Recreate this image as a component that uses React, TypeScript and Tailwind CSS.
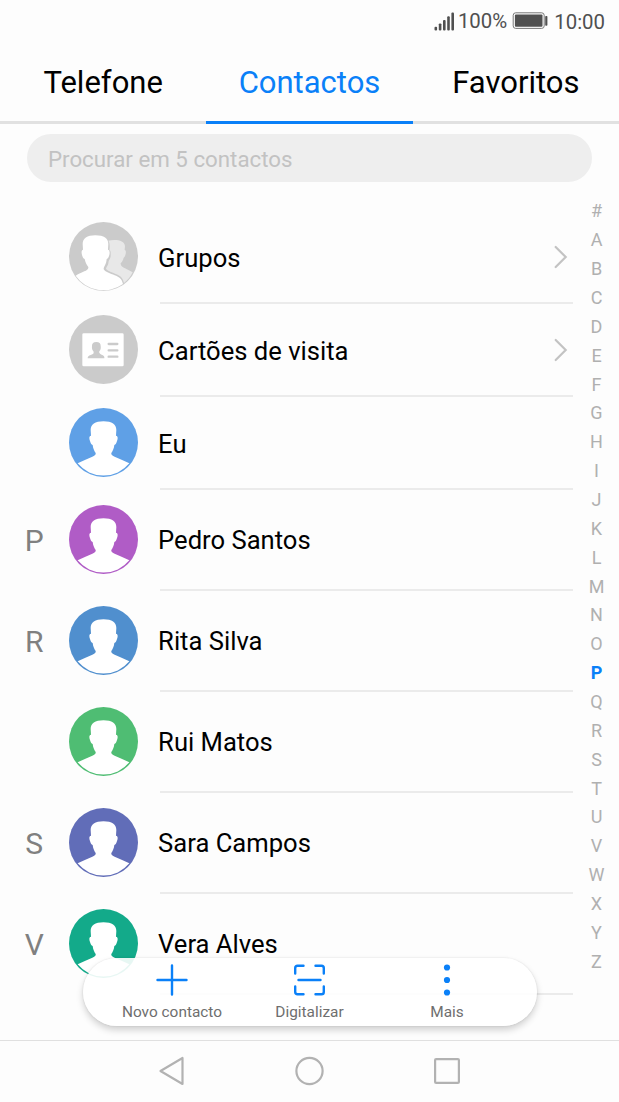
import React from "react";

type Contact = { name: string; color: string; letter?: string };

const contacts: Contact[] = [
  { name: "Pedro Santos", color: "#b05cc6", letter: "P" },
  { name: "Rita Silva", color: "#508fce", letter: "R" },
  { name: "Rui Matos", color: "#4fbd73", letter: "" },
  { name: "Sara Campos", color: "#616db8", letter: "S" },
  { name: "Vera Alves", color: "#13aa8a", letter: "V" },
];

const letters = "#ABCDEFGHIJKLMNOPQRSTUVWXYZ".split("");

function PersonAvatar({ color }: { color: string }) {
  return (
    <svg className="size-[69px] shrink-0" viewBox="0 0 207 207">
      <circle cx="103.5" cy="103.5" r="103.5" fill={color} />
      <path
        fill="#fff"
        d="M103.5 40C78 40 65 49 65 66L66 83C60 83 60 92 63 99C65 106 67 110 71 111C72 122 76 129 80 135C81 140 77 143 70 146C55 153 40 159 26 166A100 100 0 0 0 181 166C167 159 152 153 137 146C130 143 126 140 127 135C131 129 135 122 136 111C140 110 142 106 144 99C147 92 147 83 141 83L142 66C142 49 129 40 103.5 40Z"
      />
    </svg>
  );
}

function GroupAvatar() {
  return (
    <svg className="size-[69px] shrink-0" viewBox="0 0 207 207">
      <circle cx="103.5" cy="103.5" r="103.5" fill="#cbcbcb" />
      <path
        fill="#e8e8e8"
        d="M118 56C138 51 168 54 168 73L167 83C172 85 171 94 169 99C168 103 166 106 164 107C162 116 158 120 155 124C154 132 161 136 168 139L191 151C185 164 177 174 165 183C161 165 152 161 140 156C130 151 117 148 111 141C111 136 115 132 117 128C119 122 118 117 121 113C126 108 125 98 125 91C125 87 123 85 121 85C123 71 122 62 118 56Z"
      />
      <path
        fill="#fff"
        d="M79 40C54 40 41 49 41 66L42 83C37 84 37 92 39 99C41 106 43 110 47 111C49 122 54 130 58 135C59 141 53 145 46 148C35 153 27 157 20 161A101 101 0 0 0 162 186C158 168 149 165 137 160C125 155 107 149 104 142C103 135 112 129 113 111C117 110 119 106 121 99C123 92 122 84 117 83L118 66C118 49 105 40 79 40Z"
      />
    </svg>
  );
}

function CardAvatar() {
  return (
    <svg className="size-[69px] shrink-0" viewBox="0 0 207 207">
      <circle cx="103.5" cy="103.5" r="103.5" fill="#cbcbcb" />
      <rect x="40" y="55" width="124" height="99" rx="4" fill="#fff" />
      <path
        fill="#cbcbcb"
        d="M82 81C73 81 69 85 69 93C68 101 70 106 74 110C75 117 70 118 65 120C59 122 56 124 56 130H106V126C105 121 99 120 94 117C91 115 90 112 91 109C95 104 96 101 95 93C95 85 91 81 82 81Z"
      />
      <path d="M119 87H145M119 106H145M119 125H145" stroke="#cbcbcb" strokeWidth="7" strokeLinecap="round" />
    </svg>
  );
}

function Chevron() {
  return (
    <svg className="mr-[5.5px] h-6 w-[14px]" viewBox="0 0 14 24" fill="none" stroke="#c3c3c3" strokeWidth="2.2" strokeLinecap="round">
      <path d="M1.7 2L11.7 12L1.7 22" />
    </svg>
  );
}

function Row({
  label,
  letter = "",
  avatar,
  tall = false,
  chevron = false,
}: {
  label: string;
  letter?: string;
  avatar: React.ReactNode;
  tall?: boolean;
  chevron?: boolean;
}) {
  return (
    <div className={`flex shrink-0 ${tall ? "h-[101px]" : "h-[93px]"}`}>
      <div className={`flex w-[68.5px] items-center justify-center text-[30px] text-[#808080] ${tall ? "pb-px" : ""}`}>{letter}</div>
      <div className={`flex items-center ${tall ? "pb-[2px]" : "pb-[2px]"}`}>{avatar}</div>
      <div className="ml-[22.5px] mr-[2px] flex flex-1 items-center justify-between border-b-2 border-[#ebebeb]">
        <span className={`-ml-[1.9px] text-[25.6px] leading-8 text-black ${tall ? "pt-px" : "pt-[2px]"}`}>{label}</span>
        {chevron && <Chevron />}
      </div>
    </div>
  );
}

function StatusBar() {
  return (
    <header className="flex h-[42px] shrink-0 items-center justify-end pr-[14px] text-[20.4px] leading-[42px] text-[#505050]">
      <svg className="mr-1 h-[19px] w-5" viewBox="0 0 20 20" preserveAspectRatio="none" fill="#505050">
        <rect x="0.5" y="15.5" width="2.6" height="4" rx="1" />
        <rect x="4.8" y="12" width="2.6" height="7.5" rx="1" />
        <rect x="9" y="8.5" width="2.6" height="11" rx="1" />
        <rect x="13.2" y="4.5" width="2.6" height="15" rx="1" />
        <rect x="17.4" y="0.5" width="2.6" height="19" rx="1" />
      </svg>
      <span className="pb-px">100%</span>
      <svg className="ml-[5px] mr-[6px] h-[18px] w-9" viewBox="0 0 36 18">
        <rect x="1.2" y="0.8" width="31" height="15.6" rx="2.5" fill="none" stroke="#777" strokeWidth="1" />
        <rect x="2.9" y="2.4" width="27.6" height="12.4" rx="1" fill="#505050" />
        <rect x="33.2" y="3.9" width="2.2" height="9.8" rx="0.8" fill="#505050" />
      </svg>
      <span className="pt-px">10:00</span>
    </header>
  );
}

function Tabs() {
  const base = "flex flex-1 items-center justify-center border-b-[3.5px] pt-[3px] text-[31px]";
  return (
    <nav className="flex h-[82px] shrink-0">
      <div className={`${base} border-[#e1e1e1] text-black`}>Telefone</div>
      <div className={`${base} border-[#0a80f8] text-[#0a80f8]`}>Contactos</div>
      <div className={`${base} border-[#e1e1e1] text-black`}>Favoritos</div>
    </nav>
  );
}

function AlphabetIndex() {
  return (
    <aside className="flex h-[779px] w-11 shrink-0 flex-col pr-px text-[18px] text-[#b0b0b0]">
      {letters.map((l) => (
        <div
          key={l}
          className={`flex flex-1 items-center justify-center leading-none ${l === "P" ? "font-bold text-[#0a80f8]" : ""}`}
        >
          {l}
        </div>
      ))}
    </aside>
  );
}

function Toolbar() {
  return (
    <div className="absolute left-[82.5px] top-[958px] flex h-[68px] w-[454px] justify-center rounded-full bg-white/90 text-[15.4px] text-[#6e6e6e] shadow-[0_4px_7px_rgba(0,0,0,0.18),0_0_2px_rgba(0,0,0,0.12)]">
      <div className="flex w-[137.5px] flex-col items-center pt-[5px]">
        <svg className="size-[34px]" viewBox="0 0 34 34" fill="none" stroke="#0a80f8" strokeWidth="2.4" strokeLinecap="round">
          <path d="M17 2.5V31.5M2.5 17H31.5" />
        </svg>
        <span className="mt-[3px] whitespace-nowrap leading-6">Novo contacto</span>
      </div>
      <div className="flex w-[137.5px] flex-col items-center pt-[5px]">
        <svg className="size-[34px]" viewBox="0 0 34 34" fill="none" stroke="#0a80f8" strokeWidth="2.4" strokeLinecap="round">
          <path d="M2.2 10.5V5Q2.2 2.7 4.5 2.7H10.5M22.5 2.7H28.5Q30.8 2.7 30.8 5V10.5M30.8 23.5V29Q30.8 31.3 28.5 31.3H22.5M10.5 31.3H4.5Q2.2 31.3 2.2 29V23.5M5.5 17H27.5" />
        </svg>
        <span className="mt-[3px] leading-6">Digitalizar</span>
      </div>
      <div className="flex w-[137.5px] flex-col items-center pt-[5px]">
        <svg className="size-[34px]" viewBox="0 0 34 34" fill="#0a80f8">
          <circle cx="17" cy="4.5" r="3.1" />
          <circle cx="17" cy="17" r="3.1" />
          <circle cx="17" cy="29.5" r="3.1" />
        </svg>
        <span className="mt-[3px] leading-6">Mais</span>
      </div>
    </div>
  );
}

function SystemNav() {
  return (
    <footer className="flex h-[62px] shrink-0 items-center justify-center border-t border-[#e0e0e0] bg-[#fdfdfd] pb-px">
      <div className="flex w-[137.5px] justify-center">
        <svg className="size-8" viewBox="0 0 32 32" fill="none" stroke="#b2b2b2" strokeWidth="2.2" strokeLinejoin="round">
          <path d="M26.5 3V29L4.5 16Z" />
        </svg>
      </div>
      <div className="flex w-[137.5px] justify-center">
        <svg className="size-8" viewBox="0 0 32 32" fill="none" stroke="#b2b2b2" strokeWidth="2.2">
          <circle cx="15.5" cy="16" r="13.1" />
        </svg>
      </div>
      <div className="flex w-[137.5px] justify-center">
        <svg className="size-8" viewBox="0 0 32 32" fill="none" stroke="#b2b2b2" strokeWidth="2.2">
          <rect x="4.1" y="4.1" width="23.8" height="23.8" rx="1" />
        </svg>
      </div>
    </footer>
  );
}

export default function App() {
  return (
    <div className="relative flex h-[1102px] w-[619px] flex-col overflow-hidden bg-[#fdfdfd] font-['Roboto',sans-serif]">
      <StatusBar />
      <Tabs />
      <div className="ml-[27px] mt-[10px] flex h-12 w-[565px] shrink-0 items-center rounded-full bg-[#eeeeee] pl-[21px] pt-[3px] text-[22.3px] text-[#c2c2c2]">
        Procurar em 5 contactos
      </div>
      <main className="flex min-h-0 flex-1 pt-[15px]">
        <div className="flex flex-1 flex-col pt-[14px]">
          <Row label="Grupos" avatar={<GroupAvatar />} chevron />
          <Row label="Cartões de visita" avatar={<CardAvatar />} chevron />
          <Row label="Eu" avatar={<PersonAvatar color="#5fa0e6" />} />
          {contacts.map((c) => (
            <Row key={c.name} label={c.name} letter={c.letter} avatar={<PersonAvatar color={c.color} />} tall />
          ))}
        </div>
        <AlphabetIndex />
      </main>
      <Toolbar />
      <SystemNav />
    </div>
  );
}
